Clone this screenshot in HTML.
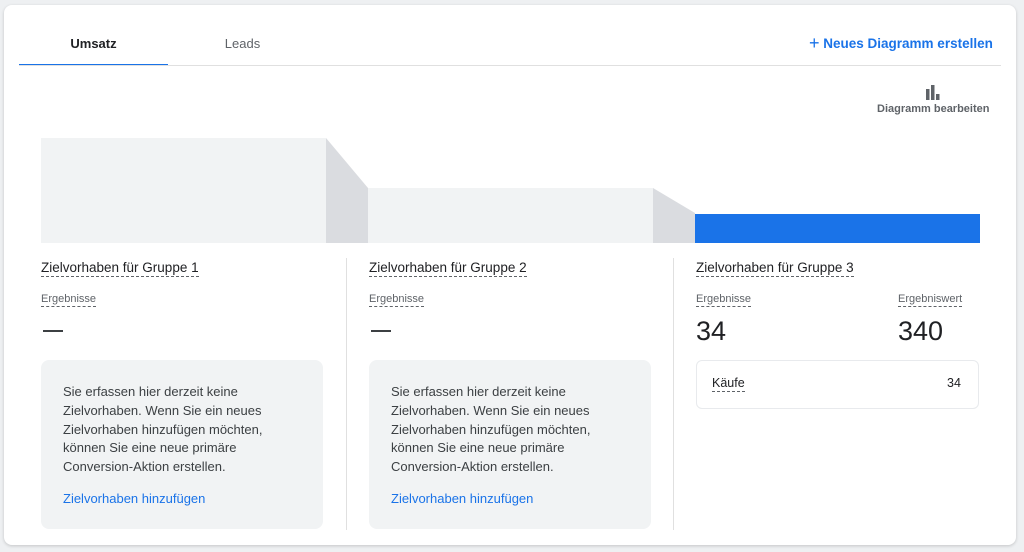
<!DOCTYPE html>
<html><head><meta charset="utf-8"><style>
*{margin:0;padding:0;box-sizing:border-box}
body{width:1024px;height:552px;background:#eef0f2;font-family:"Liberation Sans",Arial,sans-serif;color:#3c4043;position:relative;overflow:hidden}
.card{position:absolute;left:4px;top:5px;width:1012px;height:540px;background:#fff;border-radius:8px;box-shadow:0 1px 3px rgba(0,0,0,.18)}
.a{position:absolute}
.tab{position:absolute;top:36px;font-size:13px;width:149px;text-align:center}
.u{border-bottom:1px dashed #5f6368;padding-bottom:1px}
.t{font-size:13.5px;color:#202124}
.l{font-size:11px;color:#5f6368}
.box{position:absolute;top:360px;width:282px;height:169px;background:#f1f3f4;border-radius:8px;padding:23px 50px 22px 22px;font-size:13px;line-height:18.8px;color:#3c4043}
.box a{display:block;margin-top:13px;color:#1a73e8;text-decoration:none;font-size:13px;white-space:nowrap}
.big{font-size:27px;color:#202124}
</style></head><body>
<div class="card"></div>
<div class="tab" style="left:19px;color:#202124;font-weight:bold">Umsatz</div>
<div class="tab" style="left:168px;color:#5f6368">Leads</div>
<div class="a" style="left:19px;top:64px;width:149px;height:2px;background:#1a73e8"></div>
<div class="a" style="left:19px;top:65px;width:982px;height:1px;background:#e0e0e0"></div>
<div class="a" style="left:809px;top:32px;font-size:13.5px;color:#1a73e8;font-weight:bold">
<span style="font-size:18px;font-weight:normal;position:relative;top:1px">+</span> Neues Diagramm erstellen</div>
<svg class="a" style="left:925px;top:84px" width="16" height="16" viewBox="0 0 16 16"><rect x="1" y="5" width="3.5" height="11" fill="#5f6368"/><rect x="6" y="1" width="3.5" height="15" fill="#5f6368"/><rect x="11" y="10" width="3.5" height="6" fill="#5f6368"/></svg>
<div class="a" style="left:877px;top:103px;font-size:11px;color:#5f6368;font-weight:bold">Diagramm bearbeiten</div>
<svg class="a" style="left:0;top:0" width="1024" height="260">
<rect x="41" y="138" width="285" height="105" fill="#f1f3f4"/>
<polygon points="326,138 368,188 368,243 326,243" fill="#dadce0"/>
<rect x="368" y="188" width="285" height="55" fill="#f1f3f4"/>
<polygon points="653,188 695,213 695,243 653,243" fill="#dadce0"/>
<rect x="695" y="214" width="285" height="29" fill="#1a73e8"/>
</svg>
<div class="a" style="left:346px;top:258px;width:1px;height:272px;background:#e0e0e0"></div>
<div class="a" style="left:673px;top:258px;width:1px;height:272px;background:#e0e0e0"></div>

<div class="a t" style="left:41px;top:260px"><span class="u">Zielvorhaben für Gruppe 1</span></div>
<div class="a l" style="left:41px;top:293px"><span class="u">Ergebnisse</span></div>
<div class="a" style="left:43px;top:330px;width:20px;height:2px;background:#3c4043"></div>
<div class="box" style="left:41px">Sie erfassen hier derzeit keine Zielvorhaben. Wenn Sie ein neues Zielvorhaben hinzufügen möchten, können Sie eine neue primäre Conversion-Aktion erstellen.<a>Zielvorhaben hinzufügen</a></div>

<div class="a t" style="left:369px;top:260px"><span class="u">Zielvorhaben für Gruppe 2</span></div>
<div class="a l" style="left:369px;top:293px"><span class="u">Ergebnisse</span></div>
<div class="a" style="left:371px;top:330px;width:20px;height:2px;background:#3c4043"></div>
<div class="box" style="left:369px">Sie erfassen hier derzeit keine Zielvorhaben. Wenn Sie ein neues Zielvorhaben hinzufügen möchten, können Sie eine neue primäre Conversion-Aktion erstellen.<a>Zielvorhaben hinzufügen</a></div>

<div class="a t" style="left:696px;top:260px"><span class="u">Zielvorhaben für Gruppe 3</span></div>
<div class="a l" style="left:696px;top:293px"><span class="u">Ergebnisse</span></div>
<div class="a l" style="left:898px;top:293px"><span class="u">Ergebniswert</span></div>
<div class="a big" style="left:696px;top:316px">34</div>
<div class="a big" style="left:898px;top:316px">340</div>
<div class="a" style="left:696px;top:360px;width:283px;height:49px;border:1px solid #e8eaed;border-radius:6px"></div>
<div class="a" style="left:712px;top:376px;font-size:12.5px;color:#202124"><span class="u">Käufe</span></div>
<div class="a" style="left:947px;top:376px;font-size:12.5px;color:#202124">34</div>
</body></html>
